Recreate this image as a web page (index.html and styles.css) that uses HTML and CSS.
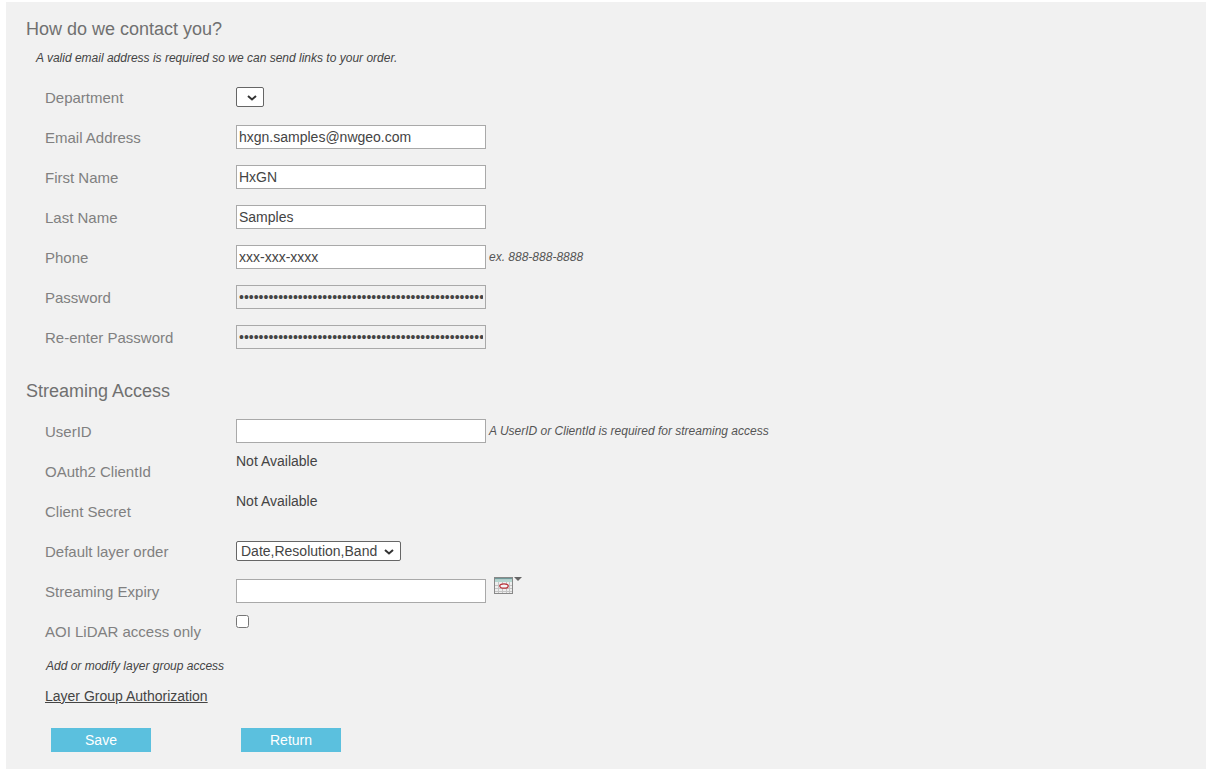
FILE: index.html
```html
<!DOCTYPE html>
<html>
<head>
<title>My Account</title>
<meta charset="utf-8" />
<link rel="stylesheet" href="styles.css">
</head>
<body>
<form class="panel">
	<h2 class="sectionTitle">How do we contact you?</h2>
	<p class="sectionNote">A valid email address is required so we can send links to your order.</p>
	<div class="formRow">
		<label>Department</label>
		<select class="deptSelect"><option></option></select>
	</div>
	<div class="formRow">
		<label>Email Address</label>
		<input class="textBox" type="text" value="hxgn.samples@nwgeo.com">
	</div>
	<div class="formRow">
		<label>First Name</label>
		<input class="textBox" type="text" value="HxGN">
	</div>
	<div class="formRow">
		<label>Last Name</label>
		<input class="textBox" type="text" value="Samples">
	</div>
	<div class="formRow">
		<label>Phone</label>
		<input class="textBox" type="text" value="xxx-xxx-xxxx">
		<span class="hint">ex. 888-888-8888</span>
	</div>
	<div class="formRow">
		<label>Password</label>
		<input class="textBox passBox" type="password" value="passwordpasswordpasswordpasswordpasswordpasswordpasswordpassword">
	</div>
	<div class="formRow">
		<label>Re-enter Password</label>
		<input class="textBox passBox" type="password" value="passwordpasswordpasswordpasswordpasswordpasswordpasswordpassword">
	</div>

	<h2 class="sectionTitle streamTitle">Streaming Access</h2>
	<div class="formRow">
		<label>UserID</label>
		<input class="textBox" type="text">
		<span class="hint">A UserID or ClientId is required for streaming access</span>
	</div>
	<div class="formRow topRow">
		<label>OAuth2 ClientId</label>
		<span class="plainValue">Not Available</span>
	</div>
	<div class="formRow topRow">
		<label>Client Secret</label>
		<span class="plainValue">Not Available</span>
	</div>
	<div class="formRow">
		<label>Default layer order</label>
		<select class="orderSelect"><option>Date,Resolution,Band</option></select>
	</div>
	<div class="formRow">
		<label>Streaming Expiry</label>
		<input class="textBox" type="text">
		<svg class="calIcon" width="30" height="22" viewBox="0 0 30 22">
			<rect x="1.5" y="3.5" width="18" height="16" fill="#eee" stroke="#888"/>
			<rect x="2" y="4" width="17" height="1.5" fill="#6f9898"/>
			<rect x="2" y="5.5" width="17" height="2.5" fill="#b5d6d0"/>
			<path d="M2 11.5h17M2 14.5h17M2 17.5h17M5.5 8v11M9.5 8v11M13.5 8v11M16.5 8v11" stroke="#c4c4c4" stroke-width="1" fill="none"/>
			<ellipse cx="11" cy="12" rx="4.2" ry="2.2" fill="#f4f4f4" stroke="#b8333a" stroke-width="1.3"/>
			<path d="M21 3h8l-4 4z" fill="#666"/>
		</svg>
	</div>
	<div class="formRow topRow">
		<label>AOI LiDAR access only</label>
		<input class="checkBox" type="checkbox">
	</div>
	<p class="groupNote">Add or modify layer group access</p>
	<a class="groupLink" href="#">Layer Group Authorization</a>
	<div class="buttonRow">
		<button class="btn" type="button">Save</button>
		<button class="btn" type="button">Return</button>
	</div>
</form>
</body>
</html>
```

FILE: styles.css
```css
*{
	box-sizing:border-box;
}
body{
	margin:0;
	padding:2px 5px 0 6px;
	background:#fff;
	font-family:"Liberation Sans",Arial,sans-serif;
	height:769px;
	overflow:hidden;
}
.panel{
	background:#f1f1f1;
	height:767px;
	padding:16px 0 0 20px;
}
.sectionTitle{
	margin:0;
	font-size:18px;
	font-weight:normal;
	line-height:22px;
	color:#707070;
}
.streamTitle{
	margin-top:23px;
	margin-bottom:9px;
}
.sectionNote{
	margin:11px 0 12px 10px;
	font-size:12px;
	font-style:italic;
	line-height:14px;
	color:#444;
}
.formRow{
	display:flex;
	align-items:center;
	height:40px;
	padding-left:19px;
	font-size:14px;
	color:#444;
}
.formRow label{
	width:191px;
	flex:none;
	font-size:15px;
	color:#808080;
}
.topRow{
	align-items:flex-start;
}
.topRow label{
	padding-top:12px;
}
.plainValue{
	margin-top:2px;
	line-height:16px;
}
.textBox{
	width:250px;
	height:24px;
	padding:0 2px;
	border:1px solid #a9a9a9;
	border-radius:0;
	background:#fff;
	font-family:inherit;
	font-size:14px;
	color:#444;
}
.passBox{
	background:#f1f1f1;
}
.hint{
	margin-left:3px;
	font-size:12px;
	font-style:italic;
	color:#555;
}
.deptSelect,
.orderSelect{
	appearance:none;
	height:20px;
	padding:0 0 0 4px;
	border:1px solid #666;
	border-radius:2px;
	background:#fff url("data:image/svg+xml,%3Csvg xmlns='http://www.w3.org/2000/svg' width='10' height='6'%3E%3Cpath d='M1 1l4 3.5L9 1' fill='none' stroke='%23333' stroke-width='2'/%3E%3C/svg%3E") no-repeat;
	font-family:inherit;
	font-size:14px;
	color:#444;
}
.deptSelect{
	width:28px;
	background-position:10px 7px;
}
.orderSelect{
	width:165px;
	background-position:147px 7px;
}
.calIcon{
	margin:-12px 0 0 7px;
}
.checkBox{
	width:13px;
	height:13px;
	margin:4px 0 0;
}
.groupNote{
	margin:0 0 0 20px;
	padding-top:8px;
	font-size:12px;
	font-style:italic;
	line-height:14px;
	color:#444;
}
.groupLink{
	display:block;
	margin:14px 0 0 19px;
	font-size:14px;
	line-height:18px;
	color:#444;
	width:max-content;
}
.buttonRow{
	display:flex;
	gap:90px;
	margin:23px 0 0 25px;
}
.btn{
	width:100px;
	height:24px;
	border:0;
	padding:0;
	background:#5bc0de;
	color:#fff;
	font-family:inherit;
	font-size:14px;
}
```
